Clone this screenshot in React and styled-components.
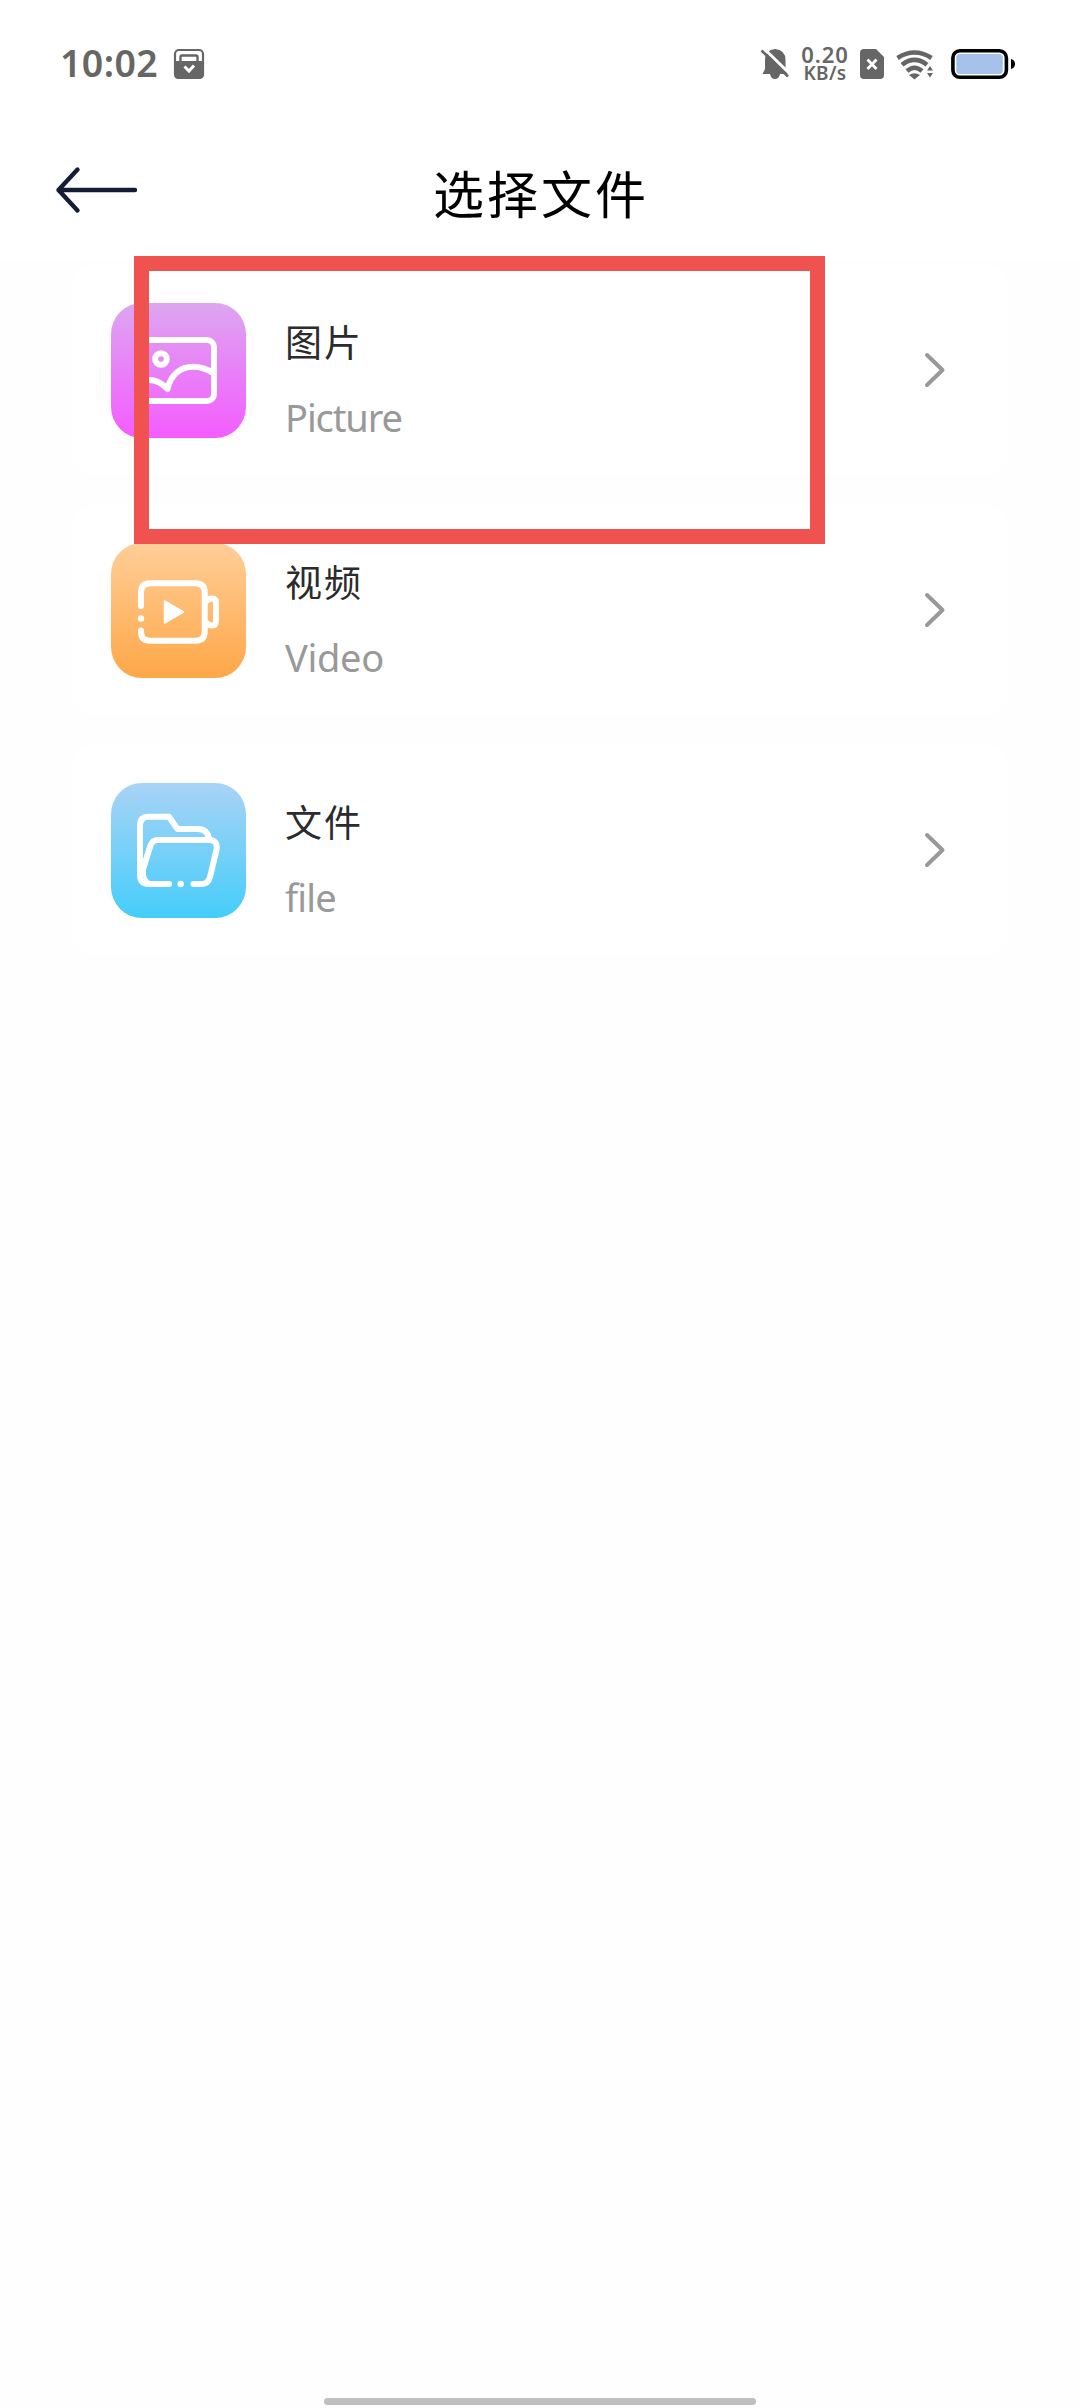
import React from "react";
import styled, { createGlobalStyle } from "styled-components";

const GlobalStyle = createGlobalStyle`
  * { box-sizing: border-box; }
  body { margin: 0; background: #fefefe; }
`;

const Screen = styled.div`
  position: relative;
  display: flex;
  flex-direction: column;
  width: 1080px;
  height: 2408px;
  overflow: hidden;
  background: #fefefe;
  font-family: "Noto Sans", "Noto Sans CJK SC", sans-serif;
`;

const StatusBar = styled.div`
  display: flex;
  align-items: center;
  justify-content: space-between;
  height: 128px;
  padding: 0 64px 0 60px;
  background: #fff;
  color: #666;
`;

const StatusGroup = styled.div`
  display: flex;
  align-items: center;
`;

const Clock = styled.span`
  width: 113px;
  padding-bottom: 2px;
  font-size: 37.5px;
  line-height: 52px;
  font-weight: 600;
  letter-spacing: 0.4px;
  white-space: nowrap;
`;

const Speed = styled.div`
  display: flex;
  flex-direction: column;
  align-items: center;
  width: 50px;
  margin: 0 10px 0 11px;
  font-weight: 600;
`;

const SpeedLine = styled.span`
  font-size: ${(p) => p.$size}px;
  line-height: 19px;
  letter-spacing: ${(p) => p.$spacing}px;
  white-space: nowrap;
`;

const Gap = styled.span`
  width: ${(p) => p.$w}px;
`;

const Icon = styled.svg`
  display: block;
  flex: none;
  overflow: visible;
`;

const Header = styled.header`
  display: grid;
  grid-template-columns: 140px 1fr 140px;
  align-items: center;
  height: 132px;
  background: #fff;
`;

const BackButton = styled.button`
  display: flex;
  padding: 0 0 8px 56px;
  border: 0;
  background: none;
`;

const Title = styled.h1`
  margin: 0;
  padding: 0 0 4px 2px;
  text-align: center;
  font: 400 51px/76px "Noto Sans CJK SC", sans-serif;
  letter-spacing: 3px;
  color: #000;
`;

const List = styled.main`
  display: flex;
  flex-direction: column;
  gap: 30px;
  padding: 5px 72px 0;
`;

const Card = styled.div`
  display: flex;
  align-items: center;
  height: 210px;
  padding: 0 62px 0 39px;
  border-radius: 24px;
  background: #fff;
`;

const Tile = styled.div`
  width: 135px;
  height: 135px;
  border-radius: 31px;
  background: linear-gradient(${(p) => p.$from}, ${(p) => p.$to});
`;

const Labels = styled.div`
  display: flex;
  flex: 1;
  flex-direction: column;
  gap: 20px;
  padding: 17px 0 0 39px;
`;

const Name = styled.span`
  font: 400 37px/56px "Noto Sans CJK SC", sans-serif;
  letter-spacing: 2px;
  color: #2b2b2d;
`;

const Subtitle = styled.span`
  font: 400 38px/56px "Noto Sans", sans-serif;
  letter-spacing: ${(p) => p.$spacing}px;
  color: #999;
`;

const Highlight = styled.div`
  position: absolute;
  left: 134px;
  top: 256px;
  width: 691px;
  height: 288px;
  border: 15px solid #f0524f;
`;

const HomeBar = styled.div`
  width: 432px;
  height: 7px;
  margin: auto auto 3px;
  border-radius: 4px;
  background: #bfbfbf;
`;

const TileDrawing = ({ children }) => (
  <Icon width="135" height="135" viewBox="0 0 135 135" fill="none" stroke="#fff" strokeWidth="6" strokeLinecap="round" strokeLinejoin="round">
    {children}
  </Icon>
);

const PictureIcon = () => (
  <TileDrawing>
    <rect x="30" y="37" width="73" height="61" rx="7" />
    <circle cx="50" cy="56" r="5.8" />
    <path d="M31 78C42 75 50 79 56.5 86C60 71 70 63.8 82 63.8C90 63.8 96 66 102 70" />
  </TileDrawing>
);

const VideoIcon = () => (
  <TileDrawing>
    <path d="M30 63V49.5Q30 40.3 39 40.3H84.5Q93.7 40.3 93.7 49.5V88.5Q93.7 97.7 84.5 97.7H39Q30 97.7 30 88.5V87.5" />
    <path d="M95 58.5Q97.5 55.5 101 55.5Q105 55.5 105 60V78Q105 82.5 101 82.5Q97.5 82.5 95 79.5" />
    <circle cx="30" cy="75.5" r="3.2" fill="#fff" stroke="none" />
    <path d="M53.5 58V80L72.5 69Z" fill="#fff" strokeWidth="1.5" />
  </TileDrawing>
);

const FolderIcon = () => (
  <TileDrawing>
    <path d="M58 101H38Q29 101 29 92V42.5Q29 33.7 37.5 33.7H58L66.5 46H87Q96.5 46 98 56" />
    <path d="M30.5 91L39.5 62.5Q41.5 57 47 57H99Q107 57.5 105.5 67L99 94Q97 101 91 101H82.5" />
    <path d="M33.5 83V92Q34 97 39 100" strokeWidth="3" />
    <circle cx="69.7" cy="101" r="3.2" fill="#fff" stroke="none" />
  </TileDrawing>
);

const items = [
  { name: "图片", sub: "Picture", spacing: -1.1, from: "#dda6f0", to: "#f45cff", Glyph: PictureIcon },
  { name: "视频", sub: "Video", spacing: -0.3, from: "#ffce98", to: "#fea748", Glyph: VideoIcon },
  { name: "文件", sub: "file", spacing: -0.8, from: "#a9d3f6", to: "#45cdfa", Glyph: FolderIcon },
];

const Row = ({ name, sub, spacing, from, to, Glyph }) => (
  <Card>
    <Tile $from={from} $to={to}>
      <Glyph />
    </Tile>
    <Labels>
      <Name>{name}</Name>
      <Subtitle $spacing={spacing}>{sub}</Subtitle>
    </Labels>
    <Icon width="22" height="36" viewBox="0 0 22 36" fill="none" stroke="#999" strokeWidth="4" strokeLinecap="round" strokeLinejoin="round">
      <path d="M3 3L18.5 18L3 33" />
    </Icon>
  </Card>
);

export default function App() {
  return (
    <Screen>
      <GlobalStyle />
      <StatusBar>
        <StatusGroup>
          <Clock>10:02</Clock>
          <Icon width="32" height="32" viewBox="0 0 32 32" fill="none">
            <rect x="2" y="2" width="28" height="28" rx="4" stroke="#666" strokeWidth="2.2" />
            <path d="M1 13H31V26Q31 31 26 31H6Q1 31 1 26Z" fill="#666" />
            <path d="M7.5 13V9Q7.5 7.5 9 7.5H23Q24.5 7.5 24.5 9V13" stroke="#666" strokeWidth="2.4" />
            <path d="M11.5 18.5L16 23L21 17.5" stroke="#fff" strokeWidth="3" />
          </Icon>
        </StatusGroup>
        <StatusGroup>
          <Icon width="28" height="32" viewBox="0 0 28 32" fill="none">
            <path d="M14 1Q24.5 2 24.5 12V21L27 26H1.5L4 21V12Q4 2 14 1Z" fill="#666" />
            <path d="M9 26Q10 31 14 31Q18 31 19 26Z" fill="#666" />
            <path d="M2.5 0L29 26" stroke="#fff" strokeWidth="3" />
            <path d="M0.5 2.5L27 28.5" stroke="#666" strokeWidth="2.6" />
          </Icon>
          <Speed>
            <SpeedLine $size={22} $spacing={0.9}>0.20</SpeedLine>
            <SpeedLine $size={19} $spacing={0.3}>KB/s</SpeedLine>
          </Speed>
          <Icon width="24" height="30" viewBox="0 0 24 30" fill="none">
            <path d="M4 0H16L24 8V26Q24 30 20 30H4Q0 30 0 26V4Q0 0 4 0Z" fill="#666" />
            <path d="M7.5 10.5L16.5 20M16.5 10.5L7.5 20" stroke="#fff" strokeWidth="2.8" />
          </Icon>
          <Gap $w={12} />
          <Icon width="38" height="30" viewBox="0 0 38 30" fill="none" stroke="#666" strokeWidth="4.5">
            <path d="M1.5 9Q18.5 -2 35.5 9" />
            <path d="M6 15.8Q18.5 6 31 15.8" />
            <path d="M11 22Q18.5 15.5 26 22" />
            <path d="M13 26Q18.5 22.5 24 26L18.5 30.5Z" fill="#666" stroke="none" />
            <path d="M31 21.5L34 17L37 21.5ZM31 24H37L34 28.5Z" fill="#666" stroke="none" />
          </Icon>
          <Gap $w={17} />
          <Icon width="65" height="30" viewBox="0 0 65 30">
            <rect x="1.9" y="1.7" width="53.5" height="26.6" rx="7" fill="#fff" stroke="#000" strokeWidth="3.6" />
            <rect x="5.3" y="5" width="46.5" height="20" rx="3.5" fill="#a7c2ea" />
            <path d="M60 10Q64 11 64 15Q64 19 60 20Z" fill="#000" />
          </Icon>
        </StatusGroup>
      </StatusBar>
      <Header>
        <BackButton aria-label="返回">
          <Icon width="82" height="46" viewBox="0 0 82 46" fill="none" stroke="#131d36" strokeWidth="4.4" strokeLinecap="round" strokeLinejoin="round">
            <path d="M21.5 2.5L2.5 23L21.5 43.5M2.5 23H79" />
          </Icon>
        </BackButton>
        <Title>选择文件</Title>
      </Header>
      <List>
        {items.map((item) => (
          <Row key={item.sub} {...item} />
        ))}
      </List>
      <Highlight />
      <HomeBar />
    </Screen>
  );
}
